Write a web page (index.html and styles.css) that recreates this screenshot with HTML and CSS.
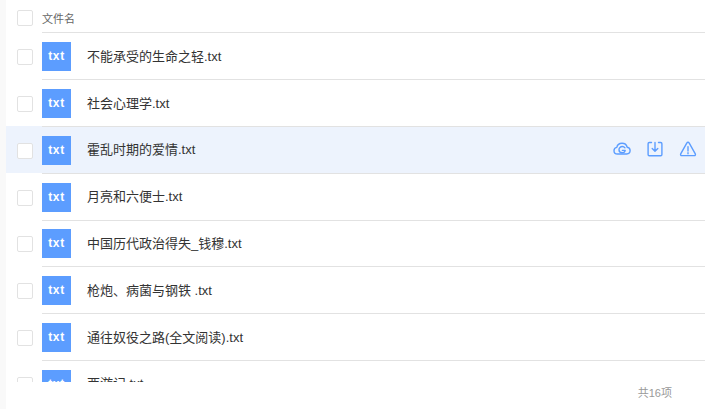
FILE: index.html
```html
<!DOCTYPE html>
<html lang="zh">
<head>
    <meta charset="UTF-8">
    <title>文件列表</title>
    <link rel="stylesheet" href="styles.css">
</head>

<body>
    <div class="panel">
        <div class="file-head">
            <span class="check"></span>
            <span class="head-name">文件名</span>
        </div>
        <div class="file-list">
            <div class="file-row">
                <span class="check"></span>
                <span class="thumb">txt</span>
                <span class="file-name">不能承受的生命之轻.txt</span>
            </div>
            <div class="file-row">
                <span class="check"></span>
                <span class="thumb">txt</span>
                <span class="file-name">社会心理学.txt</span>
            </div>
            <div class="file-row hover">
                <span class="check"></span>
                <span class="thumb">txt</span>
                <span class="file-name">霍乱时期的爱情.txt</span>
                <div class="actions">
                    <svg class="icon" viewBox="0 0 18 18">
                        <path d="M4.500 14C2.500 14 1 12.500 1 10.700c0-1.700 1.200-3 2.800-3.300C4.300 5 6.400 3.300 9 3.300c2.500 0 4.600 1.700 5.200 3.900 1.700.2 2.900 1.700 2.900 3.400 0 1.900-1.400 3.400-3.400 3.400z"/>
                        <path d="M12 7.800C11.400 7 10.400 6.500 9.300 6.500c-1.900 0-3.300 1.400-3.300 3.200 0 1.700 1.400 3.100 3.200 3.100 1.500 0 2.700-.9 3-2.400H9.400"/>
                    </svg>
                    <svg class="icon" viewBox="0 0 18 18">
                        <path d="M5.500 2.500H3.300c-.7 0-1.200.5-1.200 1.200v10.800c0 .7.5 1.200 1.200 1.200h11.400c.7 0 1.200-.5 1.200-1.200V3.700c0-.7-.5-1.200-1.200-1.200h-2.200"/>
                        <path d="M9 2.500v8.500M6.200 8.400L9 11.200l2.800-2.800"/>
                    </svg>
                    <svg class="icon" viewBox="0 0 18 18">
                        <path d="M9 2.200c.5 0 .9.300 1.100.7l6.200 11c.4.800-.1 1.700-1 1.700H2.700c-.9 0-1.400-.9-1-1.700l6.200-11c.2-.4.600-.7 1.100-.7z"/>
                        <path d="M9 6.600v4.500M9 12.800v1"/>
                    </svg>
                </div>
            </div>
            <div class="file-row">
                <span class="check"></span>
                <span class="thumb">txt</span>
                <span class="file-name">月亮和六便士.txt</span>
            </div>
            <div class="file-row">
                <span class="check"></span>
                <span class="thumb">txt</span>
                <span class="file-name">中国历代政治得失_钱穆.txt</span>
            </div>
            <div class="file-row">
                <span class="check"></span>
                <span class="thumb">txt</span>
                <span class="file-name">枪炮、病菌与钢铁 .txt</span>
            </div>
            <div class="file-row">
                <span class="check"></span>
                <span class="thumb">txt</span>
                <span class="file-name">通往奴役之路(全文阅读).txt</span>
            </div>
            <div class="file-row">
                <span class="check"></span>
                <span class="thumb">txt</span>
                <span class="file-name">西游记.txt</span>
            </div>
        </div>
        <div class="file-foot">共16项</div>
    </div>
</body>
</html>
```

FILE: styles.css
```css
html, body {
    margin: 0;
    padding: 0;
    height: 100%;
    overflow: hidden;
}
body {
    font-family: "Liberation Sans", "Noto Sans CJK SC", sans-serif;
    background-color: #f9f9f9;
    color: #333;
}
.panel {
    margin-left: 6px;
    height: 409px;
    background: #ffffff;
}
.file-head {
    display: flex;
    align-items: center;
    height: 32.2px;
    padding-left: 11px;
    padding-top: 4px;
    box-sizing: border-box;
}
.head-name {
    margin-left: 9px;
    font-size: 11px;
    color: #666;
}
.check {
    flex: none;
    width: 14px;
    height: 14px;
    background: #fff;
    border: 1px solid #e2e2e2;
    border-radius: 2px;
}
.file-row .check {
    margin-top: 1px;
}
.file-list {
    height: 350px;
    overflow: hidden;
}
.file-row {
    position: relative;
    display: flex;
    align-items: center;
    height: 46.84px;
    padding-left: 11px;
    padding-top: 2.16px;
    box-sizing: border-box;
}
.file-row::before {
    content: "";
    position: absolute;
    left: 36px;
    right: 0;
    top: 0;
    height: 1px;
    background: #e2e2e2;
}
.file-row.hover {
    background: #edf3fd;
}
.thumb {
    flex: none;
    width: 29px;
    height: 29px;
    margin-left: 9px;
    background: #5c9dff;
    color: #fff;
    font-size: 12px;
    font-weight: bold;
    letter-spacing: 0.6px;
    line-height: 29px;
    text-align: center;
}
.file-name {
    margin-left: 16px;
    margin-bottom: 3px;
    font-size: 13px;
}
.actions {
    position: absolute;
    right: 8px;
    top: 14px;
    display: flex;
    gap: 15px;
}
.icon {
    width: 18px;
    height: 18px;
    fill: none;
    stroke: #5c9dff;
    stroke-width: 1.4;
    stroke-linecap: round;
    stroke-linejoin: round;
}
.file-foot {
    margin-top: 2px;
    padding-right: 33px;
    text-align: right;
    font-size: 11px;
    color: #999;
}
```
